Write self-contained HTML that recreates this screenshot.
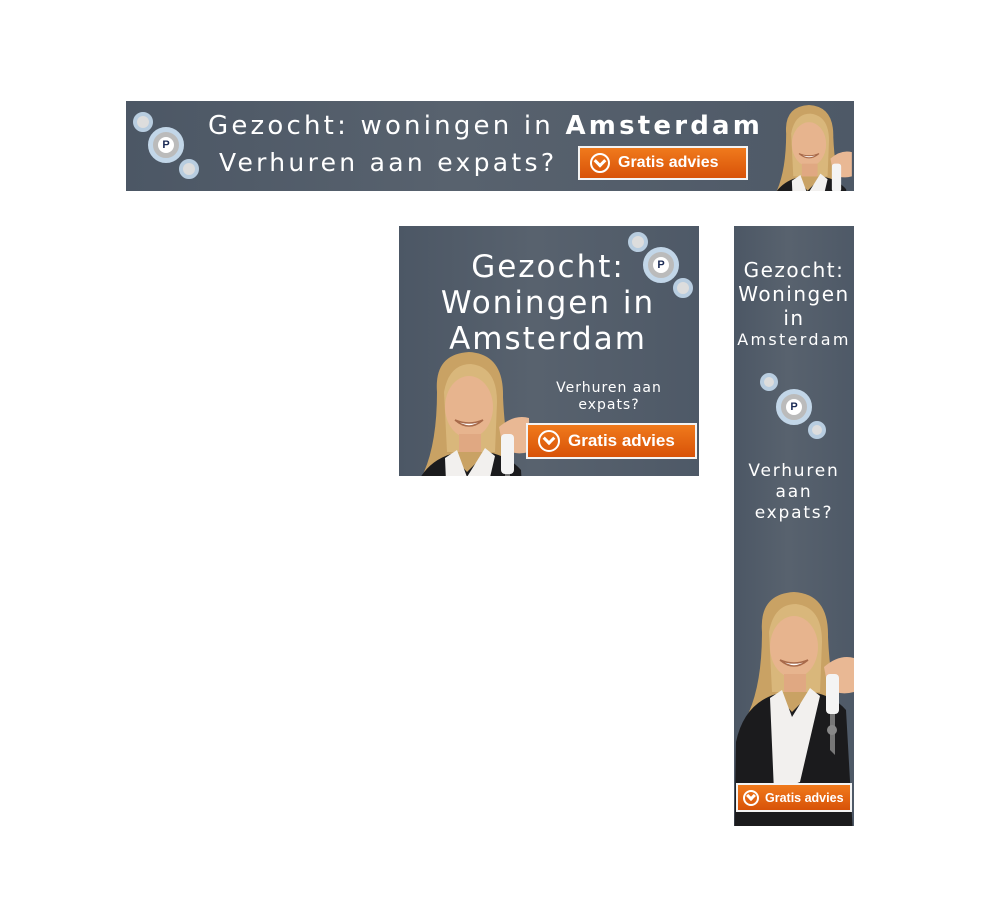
<!DOCTYPE html>
<html><head><meta charset="utf-8"><style>
body{margin:0;background:#fff;width:1000px;height:900px;position:relative;overflow:hidden;font-family:"DejaVu Sans","Liberation Sans",sans-serif}
.b{position:absolute;overflow:hidden;background:linear-gradient(90deg,#4c5765,#58626e 45%,#4e5967);}
.t{position:absolute;color:#fff;white-space:nowrap;letter-spacing:1px}
.btn{position:absolute;background:linear-gradient(#f07a1c,#d85208);border:2px solid #f3f3f3;box-sizing:border-box;color:#fff;font-family:"Liberation Sans",sans-serif;font-weight:bold;display:flex;align-items:center;}
.ic{border:2px solid #fff;border-radius:50%;box-sizing:border-box;display:inline-block;position:relative;margin-right:8px}
.ic:after{content:"";position:absolute;left:50%;top:45%;width:36%;height:36%;border-right:3px solid #fff;border-bottom:3px solid #fff;transform:translate(-50%,-60%) rotate(45deg)}
.c{position:absolute;border-radius:50%;background:#fff;box-sizing:border-box}
</style></head><body>
<svg width="0" height="0" style="position:absolute"><defs>
<g id="w">
<path d="M28 40 Q25 2 60 0 Q95 2 94 45 Q96 90 105 120 Q110 150 100 170 L5 175 Q0 150 15 120 Q28 90 28 40Z" fill="#c9a264"/>
<path d="M35 40 Q40 12 62 12 Q88 15 88 50 L86 100 L38 100Z" fill="#d9b77b"/>
<ellipse cx="60" cy="55" rx="24" ry="31" fill="#e7b48e"/>
<path d="M46 68 Q60 80 74 68 Q60 74 46 68Z" fill="#fff" stroke="#a86a4a" stroke-width="1.5"/>
<path d="M50 82 L50 100 L72 100 L72 82Z" fill="#e0a882"/>
<path d="M0 260 L2 150 Q10 112 42 102 L58 120 L78 100 Q100 104 112 118 L120 260Z" fill="#1b1b1d"/>
<path d="M36 106 L48 98 L58 125 L76 96 L86 104 L66 190 L40 200Z" fill="#f2f0ee"/>
<path d="M90 75 Q105 62 120 66 L120 100 Q105 104 94 96Z" fill="#e9b894"/>
<rect x="92" y="82" width="13" height="40" rx="4" fill="#f4f4f4"/>
<path d="M96 122 L96 158 L101 163 L101 122Z" fill="#777"/>
<circle cx="98" cy="138" r="5" fill="#888"/>
</g></defs></svg>

<!-- leaderboard -->
<div class="b" style="left:126px;top:101px;width:728px;height:90px">
<div class="c" style="left:7px;top:11px;width:20px;height:20px;border:4px solid #b8cde0;background:#ddd"></div>
<div class="c" style="left:22px;top:26px;width:36px;height:36px;border:5px solid #c2d6e8;background:#bbb;display:flex;align-items:center;justify-content:center"><span style="background:#fff;border-radius:50%;width:16px;height:16px;color:#1a2a55;font:bold 11px 'Liberation Sans';display:flex;align-items:center;justify-content:center">P</span></div>
<div class="c" style="left:53px;top:58px;width:20px;height:20px;border:4px solid #b8cde0;background:#ddd"></div>
<div class="t" style="left:82px;top:10px;font-size:26px;letter-spacing:3.2px">Gezocht: woningen in <span style="font-weight:600">Amsterdam</span></div>
<div class="t" style="left:93px;top:47px;font-size:25px;letter-spacing:3.3px">Verhuren aan expats?</div>
<div class="btn" style="left:452px;top:45px;width:170px;height:34px;font-size:16px;padding-left:10px"><span class="ic" style="width:20px;height:20px"></span>Gratis advies</div>
<svg style="position:absolute;left:640px;top:4px" width="86" height="120" viewBox="0 0 120 168"><use href="#w"/></svg>
</div>

<!-- rectangle -->
<div class="b" style="left:399px;top:226px;width:300px;height:250px">
<div class="c" style="left:229px;top:6px;width:20px;height:20px;border:4px solid #b8cde0;background:#ddd"></div>
<div class="c" style="left:244px;top:21px;width:36px;height:36px;border:5px solid #c2d6e8;background:#bbb;display:flex;align-items:center;justify-content:center"><span style="background:#fff;border-radius:50%;width:16px;height:16px;color:#1a2a55;font:bold 11px 'Liberation Sans';display:flex;align-items:center;justify-content:center">P</span></div>
<div class="c" style="left:274px;top:52px;width:20px;height:20px;border:4px solid #b8cde0;background:#ddd"></div>
<div class="t" style="left:0;width:298px;text-align:center;top:23px;font-size:31px;line-height:36px;letter-spacing:2px">Gezocht:<br>Woningen in<br>Amsterdam</div>
<svg style="position:absolute;left:10px;top:126px" width="120" height="168" viewBox="0 0 120 168"><use href="#w"/></svg>
<div class="t" style="left:140px;top:154px;width:140px;text-align:center;font-size:14px;line-height:17px">Verhuren aan<br>expats?</div>
<div class="btn" style="left:127px;top:197px;width:171px;height:36px;font-size:17px;padding-left:10px"><span class="ic" style="width:22px;height:22px"></span>Gratis advies</div>
</div>

<!-- skyscraper -->
<div class="b" style="left:734px;top:226px;width:120px;height:600px">
<div class="t" style="left:0;width:120px;text-align:center;top:32px;font-size:20px;line-height:24px;letter-spacing:1.5px">Gezocht:<br>Woningen<br>in</div>
<div class="t" style="left:0;width:120px;text-align:center;top:104px;font-size:16px;letter-spacing:2.3px">Amsterdam</div>
<div class="c" style="left:26px;top:147px;width:18px;height:18px;border:4px solid #b8cde0;background:#ddd"></div>
<div class="c" style="left:42px;top:163px;width:36px;height:36px;border:5px solid #c2d6e8;background:#bbb;display:flex;align-items:center;justify-content:center"><span style="background:#fff;border-radius:50%;width:16px;height:16px;color:#1a2a55;font:bold 11px 'Liberation Sans';display:flex;align-items:center;justify-content:center">P</span></div>
<div class="c" style="left:74px;top:195px;width:18px;height:18px;border:4px solid #b8cde0;background:#ddd"></div>
<div class="t" style="left:0;width:120px;text-align:center;top:235px;font-size:17px;line-height:21px;letter-spacing:1.8px">Verhuren<br>aan<br>expats?</div>
<svg style="position:absolute;left:0;top:366px" width="120" height="240" viewBox="0 0 120 240"><use href="#w"/></svg>
<div class="btn" style="left:2px;top:557px;width:116px;height:29px;font-size:12.5px;padding-left:5px"><span class="ic" style="width:16px;height:16px;margin-right:6px"></span>Gratis advies</div>
</div>
</body></html>
